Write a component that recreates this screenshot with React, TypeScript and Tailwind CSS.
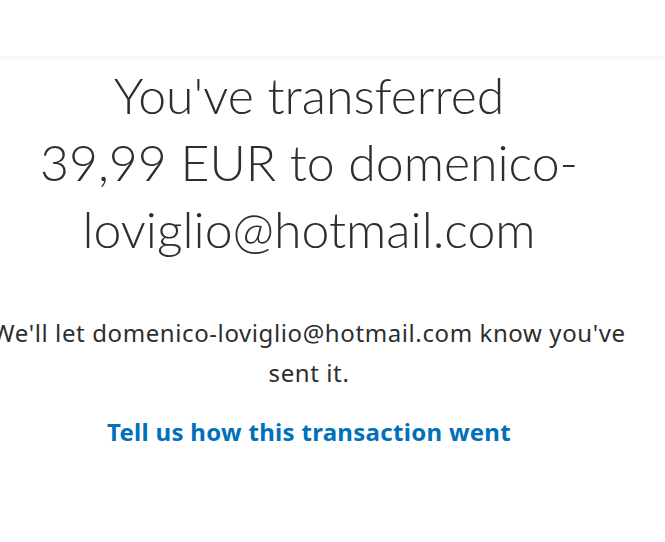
import React from 'react';

const App: React.FC = () => {
  return (
    <div className="min-h-[542px] w-[665px] overflow-hidden bg-white text-[#2c2e2f]">
      {/* Header */}
      <div className="relative h-[56px] bg-white shadow-[0_2px_6px_rgba(0,0,0,0.06)]" />

      {/* Content */}
      <div className="ml-[-9px] w-[636px] pt-[6px] text-center">
        <h1 className="whitespace-nowrap text-[50px] font-light leading-[67px]" style={{ fontFamily: 'Lato, "Noto Sans", sans-serif' }}>
          You've transferred
          <br />
          39,99 EUR to domenico-
          <br />
          loviglio@hotmail.com
        </h1>
        <p className="mt-[50px] text-[24px] leading-[40px] tracking-[0.6px]" style={{ fontFamily: '"Noto Sans", sans-serif' }}>
          We'll let domenico-loviglio@hotmail.com know you've sent it.
        </p>
        <a href="#" className="mt-[21px] inline-block text-[24px] font-bold leading-[36px] tracking-[0.3px] text-[#0070ba]" style={{ fontFamily: '"Noto Sans", sans-serif' }}>
          Tell us how this transaction went
        </a>
      </div>
    </div>
  );
};

export default App;
